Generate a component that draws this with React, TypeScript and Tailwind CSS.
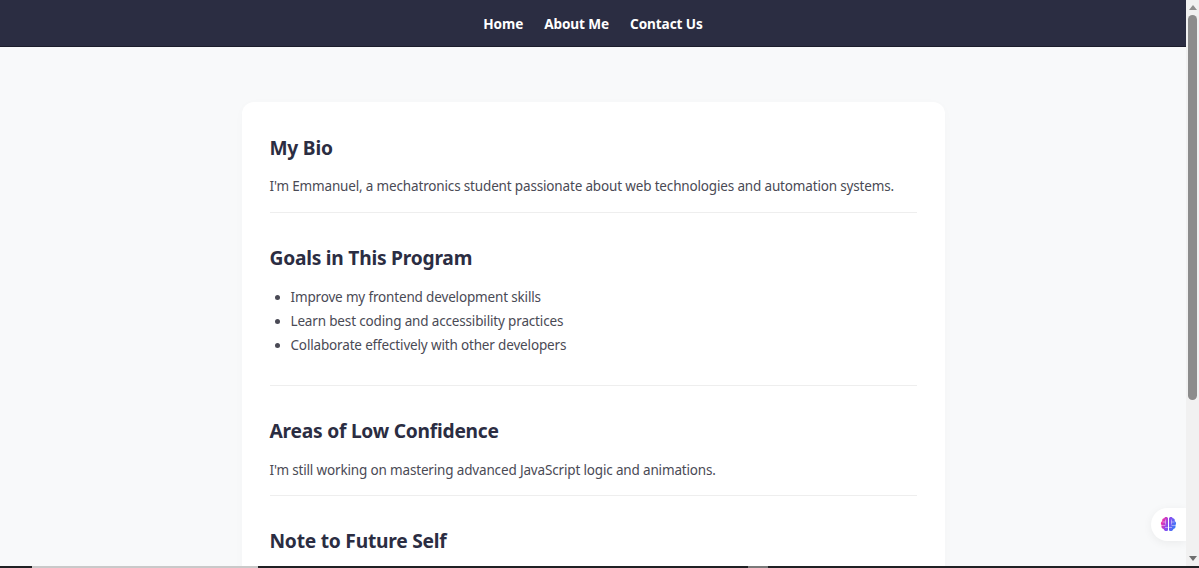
const goals = [
  "Improve my frontend development skills",
  "Learn best coding and accessibility practices",
  "Collaborate effectively with other developers",
];

function Title({ children }: { children: string }) {
  return (
    <h2 className="text-[19.2px] leading-[28px] font-bold tracking-[-0.23px] text-[#2b2d42]">{children}</h2>
  );
}

function BrainIcon() {
  return (
    <svg width="17" height="17" viewBox="0 0 17 17">
      <defs>
        <linearGradient id="brainFill" gradientUnits="userSpaceOnUse" x1="1" y1="3" x2="16" y2="9">
          <stop offset="0.1" stopColor="#f22fa6" />
          <stop offset="0.5" stopColor="#8a4bf0" />
          <stop offset="1" stopColor="#3b7bf6" />
        </linearGradient>
      </defs>
      <path
        d="M8 2.2C7.4.8 4.9.6 4.2 2.2 2.6 2.2 1.8 3.7 2.3 5 .6 5.9.5 8.3 1.7 9.3.9 11 1.9 12.9 3.6 13c.3 1.9 3.1 2.8 4.4 1.2V2.2Z"
        fill="url(#brainFill)"
      />
      <path
        d="M9 2.2c.6-1.4 3.1-1.6 3.8 0 1.6 0 2.4 1.5 1.9 2.8 1.7.9 1.8 3.3.6 4.3.8 1.7-.2 3.6-1.9 3.7-.3 1.9-3.1 2.8-4.4 1.2V2.2Z"
        fill="url(#brainFill)"
      />
      <path
        d="M2.5 6h3.2M5.5 3.5v5M1.8 9.5h3.7M5 11.5h3M11.5 3.5v5M11.3 6h3.2M11.5 9.5h3.7M9 11.5h3"
        stroke="#ffffff"
        strokeOpacity="0.55"
        strokeWidth="0.8"
        fill="none"
      />
    </svg>
  );
}

export default function App() {
  return (
    <div className="h-[568px] flex flex-col overflow-hidden bg-[#f8f9fa] font-['Noto_Sans',sans-serif]">
      <div className="flex flex-1 min-h-0">
        <div className="flex-1 min-w-0 relative overflow-hidden">
          {/* nav */}
          <nav className="h-[47px] bg-[#2b2d42] border-b border-[#1c1d2c] flex justify-center items-center gap-[21px] text-white text-[13.6px] tracking-[-0.1px] font-bold pt-[2px]">
            <a>Home</a>
            <a>About Me</a>
            <a>Contact Us</a>
          </nav>

          <main className="mt-[55px] mx-auto w-[703px] min-h-[480px] bg-white rounded-t-xl px-7 pt-[32px] shadow-[0_2px_12px_rgba(0,0,0,0.02)] text-[13.5px] tracking-[-0.16px] text-[#4a4a55]">
            <section className="border-b border-[#eeeeee] pb-[14px]">
              <Title>My Bio</Title>
              <p className="mt-[12px] leading-[24px]">
                I'm Emmanuel, a mechatronics student passionate about web technologies and automation systems.
              </p>
            </section>

            <section className="border-b border-[#eeeeee] pt-[31px] pb-[28px]">
              <Title>Goals in This Program</Title>
              <ul className="mt-[13px] pl-[21px] list-disc leading-[24px]">
                {goals.map((g) => (
                  <li key={g}>{g}</li>
                ))}
              </ul>
            </section>

            <section className="border-b border-[#eeeeee] pt-[31px] pb-[13px]">
              <Title>Areas of Low Confidence</Title>
              <p className="mt-[13px] leading-[24px]">
                I'm still working on mastering advanced JavaScript logic and animations.
              </p>
            </section>

            <section className="pt-[31px]">
              <Title>Note to Future Self</Title>
            </section>
          </main>

          {/* floating brain button */}
          <div className="absolute right-0 top-[508px] w-[35px] h-[33px] bg-white rounded-l-full shadow-[0_2px_10px_rgba(0,0,0,0.06)] flex items-center justify-center">
            <BrainIcon />
          </div>
        </div>

        {/* scrollbar */}
        <div className="w-[13px] bg-[#f1f1f1] flex flex-col items-center">
          <div className="mt-[5px] w-0 h-0 border-x-[4px] border-x-transparent border-b-[5px] border-b-[#8e8e8e]" />
          <div className="mt-[5px] w-[9px] h-[385px] rounded-full bg-[#8c8c8c]" />
          <div className="mt-auto mb-[5px] w-0 h-0 border-x-[4px] border-x-transparent border-t-[5px] border-t-[#6e6e6e]" />
        </div>
      </div>

      {/* bottom edge */}
      <div className="h-[2px] flex bg-[#202124]">
        <div className="w-[32px]" />
        <div className="w-[226px] bg-[#c9c9c9]" />
        <div className="ml-[490px] w-[20px] bg-[#7a7a7a]" />
      </div>
    </div>
  );
}
